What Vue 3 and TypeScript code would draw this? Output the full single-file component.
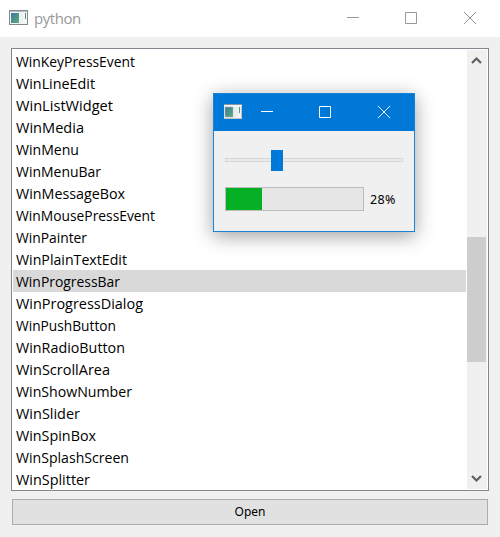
<script setup lang="ts">
import { ref } from 'vue'

interface Item {
  name: string
  width: number
}

const items: Item[] = [
  { name: 'WinKeyPressEvent', width: 119 },
  { name: 'WinLineEdit', width: 79 },
  { name: 'WinListWidget', width: 97 },
  { name: 'WinMedia', width: 68 },
  { name: 'WinMenu', width: 63 },
  { name: 'WinMenuBar', width: 85 },
  { name: 'WinMessageBox', width: 109 },
  { name: 'WinMousePressEvent', width: 139 },
  { name: 'WinPainter', width: 71 },
  { name: 'WinPlainTextEdit', width: 111 },
  { name: 'WinProgressBar', width: 104 },
  { name: 'WinProgressDialog', width: 127 },
  { name: 'WinPushButton', width: 100 },
  { name: 'WinRadioButton', width: 109 },
  { name: 'WinScrollArea', width: 94 },
  { name: 'WinShowNumber', width: 116 },
  { name: 'WinSlider', width: 64 },
  { name: 'WinSpinBox', width: 80 },
  { name: 'WinSplashScreen', width: 113 },
  { name: 'WinSplitter', width: 74 },
]
const selected = ref('WinProgressBar')
const progress = ref(28)
</script>

<template>
  <div class="window">
    <header class="titlebar">
      <svg class="app-icon" width="20" height="16" viewBox="0 0 20 16">
        <defs>
          <linearGradient id="pane" x1="0" y1="0" x2="1" y2="1">
            <stop offset="0" stop-color="#3f78a0" />
            <stop offset="1" stop-color="#58ad76" />
          </linearGradient>
        </defs>
        <rect x="0.5" y="0.5" width="18" height="14" fill="#f5f5f5" stroke="#85898c" />
        <path d="M1 1.5H18" stroke="#b5bfc6" />
        <rect x="2" y="3" width="8" height="10" fill="url(#pane)" />
        <rect x="11" y="3" width="3" height="10" fill="#eef0f1" />
        <path d="M16.5 3V9" stroke="#4d9a82" />
      </svg>
      <span class="title">python</span>
      <div class="controls">
        <svg width="12" height="12" viewBox="0 0 12 12"><path d="M0 5.5H12" /></svg>
        <svg width="12" height="12" viewBox="0 0 12 12"><path d="M.5 .5H11.5V11.5H.5Z" /></svg>
        <svg width="12" height="12" viewBox="0 0 12 12"><path d="M0 0L12 12M12 0L0 12" /></svg>
      </div>
    </header>

    <main class="content">
      <div class="list">
        <ul class="rows">
          <li
            v-for="item in items"
            :key="item.name"
            :class="{ selected: item.name === selected }"
            @click="selected = item.name"
          >
            <svg class="label" :width="item.width + 4" height="22">
              <text x="0" y="17" :textLength="item.width" lengthAdjust="spacingAndGlyphs">{{ item.name }}</text>
            </svg>
          </li>
        </ul>
        <div class="scrollbar">
          <svg class="arrow" width="9" height="7" viewBox="0 0 9 7"><path d="M0 6L4.5 1.5L9 6" /></svg>
          <div class="thumb"></div>
          <svg class="arrow down" width="9" height="7" viewBox="0 0 9 7"><path d="M0 1L4.5 5.5L9 1" /></svg>
        </div>
      </div>
      <button class="open" type="button">Open</button>
    </main>

    <section class="dialog">
      <header class="dialog-bar">
        <svg class="app-icon" width="20" height="16" viewBox="0 0 20 16">
          <rect x="0" y="0" width="18" height="15" fill="#f3f4f5" />
          <path d="M0 .5H18" stroke="#8796a2" />
          <path d="M0 14.5H18M17.5 2V14" stroke="#c3c6c8" />
          <rect x="1" y="3" width="8" height="10" fill="url(#pane)" stroke="#a9b4b8" stroke-width=".6" />
          <rect x="10" y="3" width="4" height="10" fill="#eaedef" />
          <path d="M15.5 3V9" stroke="#4d9a82" />
        </svg>
        <div class="controls">
          <svg width="12" height="12" viewBox="0 0 12 12"><path d="M0 5.5H12" /></svg>
          <svg width="12" height="12" viewBox="0 0 12 12"><path d="M.5 .5H11.5V11.5H.5Z" /></svg>
          <svg width="12" height="12" viewBox="0 0 12 12"><path d="M0 0L12 12M12 0L0 12" /></svg>
        </div>
      </header>
      <div class="dialog-body">
        <div class="slider">
          <div class="track"></div>
          <div class="handle" :style="{ left: `${Math.round((progress / 100) * 166)}px` }"></div>
        </div>
        <div class="progress-row">
          <div class="progress"><div class="fill"></div></div>
          <span class="percent">{{ progress }}%</span>
        </div>
      </div>
    </section>
  </div>
</template>

<style>
body {
  margin: 0;
  background: #f0f0f0;
}
</style>

<style scoped>
.window {
  position: relative;
  box-sizing: border-box;
  width: 500px;
  height: 537px;
  display: flex;
  flex-direction: column;
  overflow: hidden;
  background: #f0f0f0;
  color: #000;
  font-family: 'Noto Sans', 'Open Sans', sans-serif;
}
svg {
  display: block;
  flex: none;
}
.titlebar {
  display: flex;
  box-sizing: border-box;
  height: 37px;
  padding: 0 18px 0 9px;
  background: #fff;
}
.app-icon {
  margin-top: 10px;
}
.title {
  margin-left: 5px;
  color: #999;
  font-family: 'Open Sans', sans-serif;
  font-size: 15px;
  letter-spacing: -0.45px;
  line-height: 37px;
}
.controls {
  display: flex;
  gap: 46px;
  margin: 12px 6px 0 auto;
}
.controls svg:last-child {
  margin-left: 1px;
}
.controls path {
  fill: none;
  stroke: #999;
}
.content {
  display: flex;
  flex-direction: column;
  gap: 8px;
  padding: 11px 11px 12px;
}
.list {
  display: flex;
  box-sizing: border-box;
  height: 443px;
  border: 1px solid #828790;
  padding: 1px;
  background: #fff;
  overflow: hidden;
}
.rows {
  width: 453px;
  height: 440px;
  flex: none;
  margin: 0 1px 0 0;
  padding: 0;
  list-style: none;
}
.rows li {
  height: 22px;
  padding-left: 3px;
}
.rows li.selected {
  background: #d9d9d9;
}
.label {
  overflow: visible;
  font-family: 'Open Sans', sans-serif;
  font-size: 14.8px;
}
.scrollbar {
  display: flex;
  flex-direction: column;
  width: 20px;
  height: 439px;
  flex: none;
  background: #f0f0f0;
}
.arrow {
  margin: 7px 0 0 5px;
  overflow: visible;
}
.arrow path {
  fill: none;
  stroke: #606060;
  stroke-width: 2.2;
}
.thumb {
  width: 19px;
  height: 125px;
  margin-top: 173px;
  background: #cdcdcd;
}
.arrow.down {
  margin-top: 113px;
}
.open {
  box-sizing: border-box;
  width: 476px;
  height: 26px;
  margin-left: 1px;
  padding: 0;
  border: 1px solid #adadad;
  background: #e1e1e1;
  color: #000;
  font: 12px/24px 'Noto Sans', sans-serif;
}
.dialog {
  position: absolute;
  left: 213px;
  top: 93px;
  box-sizing: border-box;
  width: 202px;
  height: 139px;
  border: 1px solid #1883d7;
  background: #f0f0f0;
  box-shadow: 0 4px 18px rgba(0, 0, 0, 0.38);
}
.dialog-bar {
  display: flex;
  box-sizing: border-box;
  height: 37px;
  padding-left: 10px;
  background: #0078d7;
}
.dialog-bar .controls {
  margin: 12px 24px 0 auto;
}
.dialog-bar .controls path {
  stroke: #fff;
}
.dialog-body {
  padding: 19px 11px 0;
}
.slider {
  position: relative;
  height: 21px;
  padding-top: 8px;
  box-sizing: border-box;
}
.track {
  box-sizing: border-box;
  height: 4px;
  border: 1px solid #d6d6d6;
  background: #e7eaea;
}
.handle {
  position: absolute;
  top: 0;
  width: 12px;
  height: 21px;
  background: #0078d7;
}
.progress-row {
  display: flex;
  gap: 6px;
  margin-top: 16px;
}
.progress {
  box-sizing: border-box;
  width: 139px;
  height: 24px;
  flex: none;
  border: 1px solid #bcbcbc;
  background: #e6e6e6;
}
.fill {
  width: 36px;
  height: 22px;
  background: #06b025;
}
.percent {
  font-size: 12.5px;
  line-height: 25px;
  letter-spacing: 0.3px;
}
</style>
